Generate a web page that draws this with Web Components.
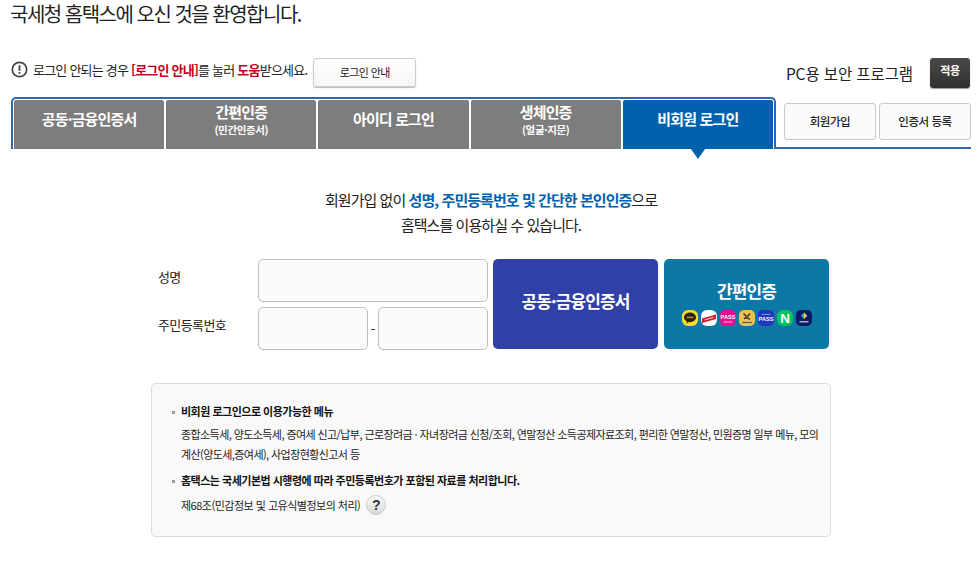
<!DOCTYPE html>
<html lang="ko">
<head>
<meta charset="utf-8">
<title>홈택스 로그인</title>
<style>
  html, body { margin: 0; padding: 0; background: #fff; }
  body { font-family: "Noto Sans CJK KR", "Noto Sans", sans-serif; color: #222; }
</style>
</head>
<body>
<ht-page>
  <ht-header></ht-header>
  <ht-tabs>
    <ht-tab>공동·금융인증서</ht-tab>
    <ht-tab sub="(민간인증서)">간편인증</ht-tab>
    <ht-tab>아이디 로그인</ht-tab>
    <ht-tab sub="(얼굴·지문)">생체인증</ht-tab>
    <ht-tab active>비회원 로그인</ht-tab>
  </ht-tabs>
  <ht-lead></ht-lead>
  <ht-login-form></ht-login-form>
  <ht-info></ht-info>
</ht-page>

<script>
class HtPage extends HTMLElement {
  constructor() {
    super();
    this.attachShadow({mode: 'open'}).innerHTML = `
    <style>
      :host { display: block; width: 980px; height: 566px; overflow: hidden; box-sizing: border-box; padding-left: 11px; }
    </style>
    <slot></slot>`;
  }
}

class HtHeader extends HTMLElement {
  constructor() {
    super();
    this.attachShadow({mode: 'open'}).innerHTML = `
    <style>
      :host { display: block; width: 960px; height: 97px; }
      h1 { margin: 0 0 0 -1px; height: 30px; font: 400 20px/28px "Noto Sans CJK KR", sans-serif; letter-spacing: -1.5px; color: #222; }
      .row { display: flex; align-items: flex-start; margin-top: 27px; height: 40px; }
      .notice { display: flex; align-items: center; height: 24px; font-size: 13px; letter-spacing: -.78px; color: #222; }
      .notice svg { margin-right: 5px; flex: none; }
      .notice b { color: #c8001e; font-weight: 700; }
      .guide { margin: 1px 0 0 6px; width: 103px; height: 29px; box-sizing: border-box; background: linear-gradient(#fff, #f6f6f6); border: 1px solid #ccc; border-radius: 3px; box-shadow: 0 1px 1px #bbb; font: 400 11px/27px "Noto Sans CJK KR", sans-serif; letter-spacing: -.6px; text-align: center; color: #222; padding: 0; }
      .sec { margin-left: auto; display: flex; align-items: flex-start; }
      .sec span { font: 400 15.5px/30px "Noto Sans CJK KR", sans-serif; letter-spacing: -.1px; margin-top: 1px; color: #222; }
      .apply { margin: 1px 1px 0 17px; width: 40px; height: 30px; background: linear-gradient(#4a4a4a, #2f2f2f); border: 0; border-radius: 3px; box-shadow: 0 1px 1px #999; color: #fff; font: 700 11px/24px "Noto Sans CJK KR", sans-serif; letter-spacing: -.4px; padding: 0 0 6px; }
    </style>
    <h1>국세청 홈택스에 오신 것을 환영합니다.</h1>
    <div class="row">
      <div class="notice">
        <svg width="17" height="17" viewBox="0 0 17 17"><circle cx="8.5" cy="8.5" r="7.2" fill="none" stroke="#444" stroke-width="1.7"/><rect x="7.6" y="4.2" width="1.8" height="5.6" fill="#444"/><rect x="7.6" y="11" width="1.8" height="1.8" fill="#444"/></svg>
        <span>로그인 안되는 경우 <b>[로그인 안내]</b>를 눌러 <b>도움</b>받으세요.</span>
      </div>
      <button class="guide">로그인 안내</button>
      <div class="sec">
        <span>PC용 보안 프로그램</span>
        <button class="apply">적용</button>
      </div>
    </div>`;
  }
}

class HtTabs extends HTMLElement {
  constructor() {
    super();
    this.attachShadow({mode: 'open'}).innerHTML = `
    <style>
      :host { display: flex; width: 960px; height: 52px; }
      .box { box-sizing: border-box; width: 765px; height: 52px; border: 2px solid #2f68ab; border-bottom: 0; border-radius: 5px 5px 0 0; padding: 1px 1px 0 1px; display: flex; gap: 2px; }
      .side { flex: 1; height: 52px; box-sizing: border-box; border-bottom: 2px solid #2f68ab; padding: 6px 0 0 9px; display: flex; gap: 3px; align-items: flex-start; margin-left: -1px; }
      .side button { width: 92px; height: 37px; background: #fafafa; border: 1px solid #c9c9c9; border-radius: 3px; font: 500 11.5px/35px "Noto Sans CJK KR", sans-serif; letter-spacing: -.45px; color: #222; padding: 0; }
    </style>
    <div class="box"><slot></slot></div>
    <div class="side"><button>회원가입</button><button>인증서 등록</button></div>`;
  }
}

class HtTab extends HTMLElement {
  constructor() {
    super();
    this.attachShadow({mode: 'open'});
  }
  connectedCallback() {
    this.render();
  }
  render() {
    const sub = this.getAttribute('sub');
    this.shadowRoot.innerHTML = `
    <style>
      :host { display: block; position: relative; width: 150.2px; height: 49px; background: #7d7d7d; color: #fff; text-align: center; border-radius: 2px 2px 0 0; }
      :host([active]) { background: #0062ad; }
      .main { font: 700 15px/20px "Noto Sans CJK KR", sans-serif; letter-spacing: -.85px; padding-top: 9px; }
      .two { padding-top: 2px; line-height: 20px; }
      .sub { font: 700 10.5px/14px "Noto Sans CJK KR", sans-serif; letter-spacing: -.4px; margin-top: 1px; }
      :host([active])::after { content: ""; position: absolute; left: 68px; top: 49px; border: 7px solid transparent; border-top: 10px solid #0062ad; border-bottom: 0; }
    </style>
    <div class="main ${sub ? 'two' : ''}"><slot></slot></div>
    ${sub ? `<div class="sub">${sub}</div>` : ''}`;
  }
}

class HtLead extends HTMLElement {
  constructor() {
    super();
    this.attachShadow({mode: 'open'}).innerHTML = `
    <style>
      :host { display: block; width: 960px; padding-top: 38px; height: 72px; font-size: 15px; line-height: 25px; letter-spacing: -.94px; text-align: center; color: #222; }
      b { color: #0062ad; font-weight: 700; }
    </style>
    회원가입 없이 <b>성명, 주민등록번호 및 간단한 본인인증</b>으로<br>홈택스를 이용하실 수 있습니다.`;
  }
}

class HtLoginForm extends HTMLElement {
  constructor() {
    super();
    this.attachShadow({mode: 'open'}).innerHTML = `
    <style>
      :host { display: flex; margin: 0 0 0 147px; height: 124px; font-family: "Noto Sans CJK KR", sans-serif; }
      .fields { width: 335px; display: grid; grid-template-columns: 100px 230px; grid-template-rows: 43px 43px; row-gap: 5px; align-content: start; }
      label { font-size: 13px; letter-spacing: -.6px; color: #222; line-height: 35px; }
      input { box-sizing: border-box; height: 43px; background: #fafafa; border: 1px solid #b9c0cc; border-radius: 5px; padding: 0 8px; margin: 0; }
      .name { width: 230px; }
      .jumin { display: flex; align-items: center; }
      .jumin input { width: 110px; }
      .jumin span { width: 10px; text-align: center; font-size: 14px; color: #333; margin-left: 0; }
      .btn { box-sizing: border-box; border: 0; height: 90px; border-radius: 5px; color: #fff; padding: 0; font: 700 17px/22px "Noto Sans CJK KR", sans-serif; letter-spacing: -.9px; display: flex; flex-direction: column; align-items: center; justify-content: center; }
      .cert { width: 165px; background: #3140a6; margin-right: 6px; padding-bottom: 6px; }
      .easy { width: 165px; background: #0b78a6; }
      .easy span { margin-top: -3px; }
      .logos { display: flex; gap: 3px; margin-top: 8px; }
      .logos svg { display: block; }
      .logos text { font-family: "Liberation Sans", sans-serif; font-weight: 700; letter-spacing: 0; }
    </style>
    <div class="fields">
      <label>성명</label><input class="name" type="text" aria-label="성명">
      <label>주민등록번호</label>
      <div class="jumin"><input type="text" aria-label="주민등록번호 앞자리"><span>-</span><input type="text" aria-label="주민등록번호 뒷자리"></div>
    </div>
    <button class="btn cert">공동·금융인증서</button>
    <button class="btn easy"><span>간편인증</span>
      <div class="logos">
        <svg width="16" height="16" viewBox="0 0 16 16"><rect width="16" height="16" rx="6" fill="#fbdc2c"/><ellipse cx="8" cy="7.4" rx="6" ry="4.8" fill="#2b2016"/><path d="M5 11l-.6 2.6L7.4 11.8z" fill="#2b2016"/><rect x="4.6" y="6.6" width="6.8" height="1.6" fill="#a98f3a"/></svg>
        <svg width="16" height="16" viewBox="0 0 16 16"><rect width="16" height="16" rx="6" fill="#fff"/><path d="M1 8.6L15 4.6v4.4L1 13z" fill="#d5182c"/><path d="M3.5 10l9-2.6" stroke="#fbd7da" stroke-width="1"/></svg>
        <svg width="16" height="16" viewBox="0 0 16 16"><rect width="16" height="16" rx="5" fill="#e1118f"/><text x="8" y="8.6" font-size="5.6" fill="#fff" text-anchor="middle">PASS</text><path d="M3.5 12h9" stroke="#f9b7dd" stroke-width="1"/></svg>
        <svg width="16" height="16" viewBox="0 0 16 16"><rect width="16" height="16" rx="5" fill="#f0c150"/><path d="M4.5 3.5l3 3M11 3.5L8.5 6.5M5 8.5l3-1 3 2" stroke="#33281a" stroke-width="1.4" fill="none"/><path d="M3 12.4h10" stroke="#5a4a22" stroke-width="1"/></svg>
        <svg width="16" height="16" viewBox="0 0 16 16"><rect width="16" height="16" rx="5" fill="#2136b8"/><path d="M3.5 4.4h9" stroke="#8d9ce6" stroke-width=".9"/><text x="8" y="11.2" font-size="5.6" fill="#fff" text-anchor="middle">PASS</text></svg>
        <svg width="16" height="16" viewBox="0 0 16 16"><rect width="16" height="16" rx="6" fill="#05c15f"/><text x="8" y="13" font-size="13.5" fill="#fff" text-anchor="middle">N</text></svg>
        <svg width="16" height="16" viewBox="0 0 16 16"><rect width="16" height="16" rx="5" fill="#0b1a63"/><path d="M8 2.5l3.2 3.2L8 8.9 4.8 5.7z" fill="#3f8fdc"/><path d="M8 2.5l3.2 3.2L8 8.9z" fill="#e9c86a"/><path d="M3.5 11.8h9" stroke="#cfd6ee" stroke-width="1.2"/></svg>
      </div>
    </button>`;
  }
}

class HtInfo extends HTMLElement {
  constructor() {
    super();
    this.attachShadow({mode: 'open'}).innerHTML = `
    <style>
      :host { display: block; box-sizing: border-box; margin: 0 0 0 140px; width: 680px; height: 154px; background: #f9f9f9; border: 1px solid #dcdcdc; border-radius: 5px; padding: 17px 0 0 20px; font-family: "Noto Sans CJK KR", sans-serif; color: #222; }
      ul { margin: 0; padding: 0; list-style: none; }
      li { position: relative; padding-left: 9px; }
      li::before { content: ""; position: absolute; left: 0; top: 10px; width: 3px; height: 3px; background: #999; }
      li + li { margin-top: 6px; }
      strong { display: block; font-size: 11px; line-height: 21px; font-weight: 700; letter-spacing: -.5px; color: #111; }
      p { margin: 2px 0 0; font-size: 11px; line-height: 20px; letter-spacing: -.58px; color: #222; width: 645px; }
      .law { display: flex; align-items: center; margin-top: 4px; width: auto; letter-spacing: -.5px; }
      .q { margin-left: 6px; width: 20px; height: 20px; border-radius: 50%; border: 1px solid #ccc; background: linear-gradient(#fafafa, #d8d8d8); box-sizing: border-box; font: 700 14px/18px "Liberation Sans", sans-serif; color: #333; text-align: center; letter-spacing: 0; }
    </style>
    <ul>
      <li><strong>비회원 로그인으로 이용가능한 메뉴</strong>
        <p>종합소득세, 양도소득세, 증여세 신고/납부, 근로장려금 · 자녀장려금 신청/조회, 연말정산 소득공제자료조회, 편리한 연말정산, 민원증명 일부 메뉴, 모의계산(양도세,증여세), 사업장현황신고서 등</p></li>
      <li><strong>홈택스는 국세기본법 시행령에 따라 주민등록번호가 포함된 자료를 처리합니다.</strong>
        <p class="law">제68조(민감정보 및 고유식별정보의 처리)<span class="q">?</span></p></li>
    </ul>`;
  }
}

customElements.define('ht-page', HtPage);
customElements.define('ht-header', HtHeader);
customElements.define('ht-tabs', HtTabs);
customElements.define('ht-tab', HtTab);
customElements.define('ht-lead', HtLead);
customElements.define('ht-login-form', HtLoginForm);
customElements.define('ht-info', HtInfo);
</script>
</body>
</html>
